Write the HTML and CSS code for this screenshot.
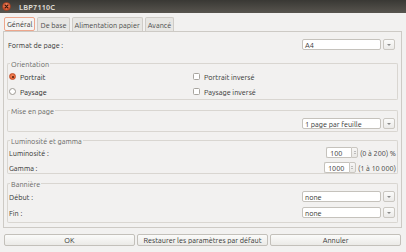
FILE: index.html
```html
<!DOCTYPE html>
<html lang="fr">
<head>
<meta charset="utf-8">
<title>LBP7110C</title>
<link rel="stylesheet" href="styles.css">
</head>
<body>
<div class="titlebar">
  <svg class="close" viewBox="0 0 9 9" width="9" height="9">
    <defs>
      <radialGradient id="cg" cx="50%" cy="35%" r="60%">
        <stop offset="0" stop-color="#f58b63"/>
        <stop offset="1" stop-color="#d9512a"/>
      </radialGradient>
    </defs>
    <circle cx="4.5" cy="4.5" r="4" fill="url(#cg)" stroke="#8e3318" stroke-width="0.6"/>
    <path d="M3 3 L6 6 M6 3 L3 6" stroke="#3c1a0e" stroke-width="1.1" stroke-linecap="round"/>
  </svg>
  <span class="title">LBP7110C</span>
</div>

<div class="tabs">
  <div class="tab active">Général</div>
  <div class="tab">De base</div>
  <div class="tab">Alimentation papier</div>
  <div class="tab">Avancé</div>
</div>

<div class="panel">
  <div class="row format">
    <span class="label">Format de page :</span>
    <div class="combo"><div class="combo-input">A4</div><div class="combo-btn"><span class="arrow"></span></div></div>
  </div>

  <section class="group orient">
    <div class="group-head"><span class="legend">Orientation</span></div>
    <div class="group-body grid2">
      <div class="opt"><span class="radio checked"></span><span class="strong">Portrait</span></div>
      <div class="opt"><span class="check"></span><span>Portrait inversé</span></div>
      <div class="opt"><span class="radio"></span><span class="strong">Paysage</span></div>
      <div class="opt"><span class="check"></span><span>Paysage inversé</span></div>
    </div>
  </section>

  <section class="group layout">
    <div class="group-head"><span class="legend">Mise en page</span></div>
    <div class="group-body">
      <div class="row end">
        <div class="combo"><div class="combo-input">1 page par feuille</div><div class="combo-btn"><span class="arrow"></span></div></div>
      </div>
    </div>
  </section>

  <section class="group lum">
    <div class="group-head"><span class="legend">Luminosité et gamma</span></div>
    <div class="group-body stack">
      <div class="srow">
        <span class="label">Luminosité :</span>
        <div class="spinwrap">
          <div class="spin"><div class="spin-input">100</div><div class="spin-btn"><span class="up"></span><span class="down"></span></div></div>
          <span class="range">(0 à 200) %</span>
        </div>
      </div>
      <div class="srow">
        <span class="label">Gamma :</span>
        <div class="spinwrap">
          <div class="spin"><div class="spin-input">1000</div><div class="spin-btn"><span class="up"></span><span class="down"></span></div></div>
          <span class="range">(1 à 10 000)</span>
        </div>
      </div>
    </div>
  </section>

  <section class="group banner">
    <div class="group-head"><span class="legend">Bannière</span></div>
    <div class="group-body stack">
      <div class="srow">
        <span class="label">Début :</span>
        <div class="combo"><div class="combo-input">none</div><div class="combo-btn"><span class="arrow"></span></div></div>
      </div>
      <div class="srow">
        <span class="label">Fin :</span>
        <div class="combo"><div class="combo-input">none</div><div class="combo-btn"><span class="arrow"></span></div></div>
      </div>
    </div>
  </section>
</div>

<div class="buttons">
  <div class="btn">OK</div>
  <div class="btn">Restaurer les paramètres par défaut</div>
  <div class="btn">Annuler</div>
</div>
</body>
</html>
```

FILE: styles.css
```css
* { box-sizing: border-box; }
html, body { margin: 0; padding: 0; }
body {
  width: 406px;
  height: 252px;
  overflow: hidden;
  background: #f2f1f0;
  font-family: Ubuntu, "Liberation Sans", sans-serif;
  font-size: 7.3px;
  line-height: 10px;
  color: #333333;
}

.titlebar {
  height: 13px;
  background: linear-gradient(#393834, #58554f);
  display: flex;
  align-items: center;
  padding-left: 2px;
  gap: 8px;
}
.close { display: block; }
.title {
  color: #dfdbd2;
  font-weight: bold;
  font-size: 7.3px;
  letter-spacing: 0.2px;
}

.tabs {
  display: flex;
  gap: 2px;
  padding-left: 4px;
  margin-top: 4px;
  height: 14px;
}
.tab {
  height: 14px;
  padding: 0 2px;
  border: 1px solid #cfccc7;
  border-bottom: none;
  border-radius: 2px 2px 0 0;
  background: #e7e6e3;
  display: flex;
  align-items: center;
  color: #4a4a4a;
}
.tab.active {
  background: #f5f4f3;
  border: 1px solid #eda68c;
  border-radius: 2px;
  color: #333333;
}

.panel {
  margin: 0 4px 0 3px;
  height: 197px;
  border: 1px solid #cdcac5;
  padding: 7px 3px 0 3px;
  display: flex;
  flex-direction: column;
}

.row { display: flex; align-items: center; height: 11px; flex: none; }
.row.format { justify-content: space-between; padding-left: 1px; padding-right: 3px; }
.row.end { justify-content: flex-end; }

.combo { display: flex; gap: 2px; height: 11px; }
.combo-input {
  width: 79px;
  height: 11px;
  background: #fff;
  border: 1px solid #c5c2bc;
  border-radius: 2px;
  padding-left: 2px;
  display: flex;
  align-items: center;
  color: #333333;
}
.combo-btn {
  width: 12px;
  height: 11px;
  border: 1px solid #cac7c1;
  border-radius: 2px;
  background: linear-gradient(#fbfbfa, #ebeae8);
  display: flex;
  align-items: center;
  justify-content: center;
}
.arrow {
  width: 0; height: 0;
  border-left: 2px solid transparent;
  border-right: 2px solid transparent;
  border-top: 2px solid #8a8a8a;
}

/* group frame: header line + body box */
.group { flex: none; }
.group-head {
  display: flex;
  height: 10px;
}
.group-head::before,
.group-head::after {
  content: "";
  align-self: flex-end;
  height: 5px;
  border-top: 1px solid #d9d6d1;
}
.group-head::before {
  width: 2px;
  border-left: 1px solid #d9d6d1;
  border-top-left-radius: 2px;
}
.group-head::after {
  flex: 1;
  border-right: 1px solid #d9d6d1;
  border-top-right-radius: 2px;
}
.legend {
  padding: 0 1px;
  line-height: 10px;
  color: #686866;
}
.group-body {
  border: 1px solid #d9d6d1;
  border-top: none;
  border-radius: 0 0 2px 2px;
  padding: 0 2px 0 1px;
}

.orient { margin-top: 9px; }
.grid2 {
  display: grid;
  grid-template-columns: 184px 1fr;
  grid-auto-rows: 15px;
}
.opt { display: flex; align-items: center; gap: 4px; }
.strong { color: #262626; }
.radio {
  width: 7px; height: 7px;
  border-radius: 50%;
  border: 1px solid #9d9a94;
  background: #fff;
  display: flex;
  align-items: center;
  justify-content: center;
}
.radio.checked {
  border-color: #c24b25;
  background: radial-gradient(circle at 50% 40%, #f68a5c, #de5a2e);
}
.radio.checked::after {
  content: "";
  width: 2px; height: 2px;
  border-radius: 50%;
  background: #4a1a0a;
}
.check {
  width: 7px; height: 7px;
  border: 1px solid #a8a59f;
  border-radius: 1.5px;
  background: #fff;
}

.layout { margin-top: 6px; }
.layout .group-body { padding-top: 2px; padding-bottom: 2px; }

.stack { display: flex; flex-direction: column; }
.lum { margin-top: 4px; }
.lum .group-body { padding-top: 1px; padding-bottom: 0; gap: 4px; padding-right: 1px; }
.srow {
  display: flex;
  align-items: center;
  justify-content: space-between;
  height: 11px;
}
.spinwrap { display: flex; align-items: center; gap: 2px; }
.spin { display: flex; height: 11px; }
.spin-input {
  width: 25px;
  height: 11px;
  background: #fff;
  border: 1px solid #c5c2bc;
  border-right: none;
  border-radius: 2px 0 0 2px;
  padding-left: 3px;
  display: flex;
  align-items: center;
}
.spin-btn {
  width: 7px;
  height: 11px;
  border: 1px solid #cac7c1;
  border-radius: 0 2px 2px 0;
  background: linear-gradient(#f7f6f5, #e9e8e5);
  display: flex;
  flex-direction: column;
  align-items: center;
  justify-content: center;
  gap: 1px;
}
.up, .down { width: 0; height: 0; border-left: 1.5px solid transparent; border-right: 1.5px solid transparent; }
.up { border-bottom: 1.5px solid #8a8a8a; }
.down { border-top: 1.5px solid #8a8a8a; }
.range { color: #444444; }

.banner { margin-top: 5px; }
.banner .group-body { padding-top: 2px; padding-bottom: 4px; gap: 5px; }

.buttons {
  display: grid;
  grid-template-columns: repeat(3, 1fr);
  gap: 2.5px;
  margin-top: 6px;
  padding: 0 5px 0 4px;
}
.btn {
  height: 12px;
  border: 1px solid #c3c0ba;
  border-radius: 2px;
  background: linear-gradient(#fbfbfa, #ebeae7);
  display: flex;
  align-items: center;
  justify-content: center;
  color: #333333;
}
```
